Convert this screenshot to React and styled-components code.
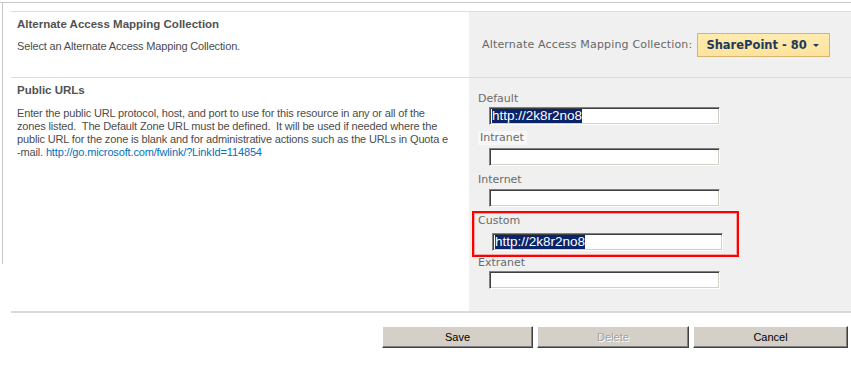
import React from "react";
import styled, { createGlobalStyle, css } from "styled-components";

const GlobalStyle = createGlobalStyle`
  body {
    margin: 0;
    background: #fff;
    font-family: "Liberation Sans", Arial, sans-serif;
  }
`;

const Page = styled.div`
  position: relative;
  margin-top: 2px;
  border-top: 1px solid #c8c8c8;
  height: 379px;

  &::before {
    content: "";
    position: absolute;
    left: 2px;
    top: 0;
    width: 1px;
    height: 261px;
    background: #c8c8c8;
  }
`;

const Sections = styled.div`
  margin: 8px 0 0 11px;
`;

const Row = styled.div`
  display: grid;
  grid-template-columns: 458px 1fr;
  border-top: 1px solid #dcdcdc;
  height: ${(p) => p.$height}px;
`;

const Info = styled.div`
  padding: 5px 0 0 6px;
`;

const Title = styled.h3`
  margin: 0;
  font: bold 11.5px/14px "Liberation Sans", Arial, sans-serif;
  color: #525252;
`;

const Desc = styled.p`
  width: 433px;
  margin: ${(p) => p.$top}px 0 0;
  font: 11px/13px "Liberation Sans", Arial, sans-serif;
  letter-spacing: -0.15px;
  color: #4c4c4c;

  a {
    color: #0072bc;
    text-decoration: none;
  }
`;

const Controls = styled.div`
  background: #f0f0f0;
  ${(p) =>
    p.$inline
      ? css`
          display: flex;
          align-items: center;
          padding-left: 13px;
        `
      : css`
          display: flex;
          flex-direction: column;
          align-items: flex-start;
          padding: 13px 0 0 9px;
        `}
`;

const ControlLabel = styled.span`
  font: 11px/14px "DejaVu Sans", Verdana, sans-serif;
  letter-spacing: 0.17px;
  color: #676767;
  margin-right: 5px;
`;

const Picker = styled.button`
  display: flex;
  align-items: center;
  gap: 6px;
  width: 133px;
  height: 24px;
  padding: 0 0 0 8px;
  box-sizing: border-box;
  border: 1px solid #d6b46c;
  background: linear-gradient(#ffeab0, #fde39c);
  font: bold 11.5px/14px "DejaVu Sans", Verdana, sans-serif;
  color: #1b3a5e;
  cursor: pointer;
`;

const Caret = styled.span`
  width: 0;
  height: 0;
  margin-top: 2px;
  border-left: 3px solid transparent;
  border-right: 3px solid transparent;
  border-top: 3px solid #1b3a5e;
`;

const Field = styled.div`
  position: relative;
  margin-top: ${(p) => p.$space}px;

  ${(p) =>
    p.$highlight &&
    css`
      &::after {
        content: "";
        position: absolute;
        left: -6px;
        top: -2px;
        width: 267px;
        height: 46px;
        box-sizing: border-box;
        border: 2px solid #ff0000;
        box-shadow: inset 0 0 0 1px rgba(255, 70, 70, 0.45);
      }
    `}
`;

const FieldLabel = styled.div`
  width: fit-content;
  margin-top: 1px;
  font: 11px/14px "DejaVu Sans", Verdana, sans-serif;
  color: #6a6a6a;
  ${(p) =>
    p.$shade &&
    css`
      background: #f7f7f7;
      padding: 0 3px 0 2px;
    `}
`;

const TextBox = styled.div`
  margin: ${(p) => p.$gap - 1}px 0 0 ${(p) => p.$indent}px;
  width: 231px;
  height: 18px;
  box-sizing: border-box;
  padding: 1px 0 0 2px;
  background: #fff;
  border: 1px solid;
  border-color: #808080 #fff #fff #808080;
  box-shadow: inset 1px 1px 0 #404040, inset -1px -1px 0 #d4d0c8;
  font-size: 0;
`;

const Selected = styled.span`
  display: inline-block;
  background: #0a246a;
  color: #fff;
  font: 13.5px/14px "Liberation Sans", Arial, sans-serif;
`;

const Rule = styled.div`
  height: 2px;
  background: #d9d9d9;
`;

const ButtonBar = styled.div`
  display: flex;
  justify-content: flex-end;
  gap: 4px;
  padding: 13px 3px 0 0;
`;

const Button = styled.button`
  width: ${(p) => p.$w}px;
  height: 22px;
  padding: 0;
  background: #d4d0c8;
  border: 1px solid;
  border-color: #fff #404040 #404040 #fff;
  box-shadow: inset -1px -1px 0 #808080;
  font: 11px "Liberation Sans", Arial, sans-serif;
  color: #000;

  &:disabled {
    color: #a0a0a0;
    text-shadow: 1px 1px 0 #fff;
  }
`;

const fields = [
  { label: "Default", value: "http://2k8r2no8", space: 0, gap: 2 },
  { label: "Intranet", space: 5, gap: 4, shade: true },
  { label: "Internet", space: 6, gap: 3 },
  { label: "Custom", value: "http://2k8r2no8", space: 6, gap: 6, indent: 14, highlight: true },
  { label: "Extranet", space: 4, gap: 2 },
];

const App = () => {
  return (
    <>
      <GlobalStyle />
      <Page>
        <Sections>
          <Row $height={65}>
            <Info>
              <Title>Alternate Access Mapping Collection</Title>
              <Desc $top={9}>Select an Alternate Access Mapping Collection.</Desc>
            </Info>
            <Controls $inline>
              <ControlLabel>Alternate Access Mapping Collection:</ControlLabel>
              <Picker>
                SharePoint - 80
                <Caret />
              </Picker>
            </Controls>
          </Row>
          <Row $height={233}>
            <Info>
              <Title>Public URLs</Title>
              <Desc $top={10}>
                Enter the public URL protocol, host, and port to use for this resource in any or all of the
                zones listed.&nbsp; The Default Zone URL must be defined.&nbsp; It will be used if needed
                where the public URL for the zone is blank and for administrative actions such as the URLs
                in Quota e{"\u200B"}-mail.{" "}
                <a href="#">http://go.microsoft.com/fwlink/?LinkId=114854</a>
              </Desc>
            </Info>
            <Controls>
              {fields.map((f) => (
                <Field key={f.label} $space={f.space} $highlight={f.highlight}>
                  <FieldLabel $shade={f.shade}>{f.label}</FieldLabel>
                  <TextBox $gap={f.gap} $indent={f.indent || 11}>
                    {f.value && <Selected>{f.value}</Selected>}
                  </TextBox>
                </Field>
              ))}
            </Controls>
          </Row>
          <Rule />
          <ButtonBar>
            <Button $w={151}>Save</Button>
            <Button $w={152} disabled>
              Delete
            </Button>
            <Button $w={155}>Cancel</Button>
          </ButtonBar>
        </Sections>
      </Page>
    </>
  );
};

export default App;
